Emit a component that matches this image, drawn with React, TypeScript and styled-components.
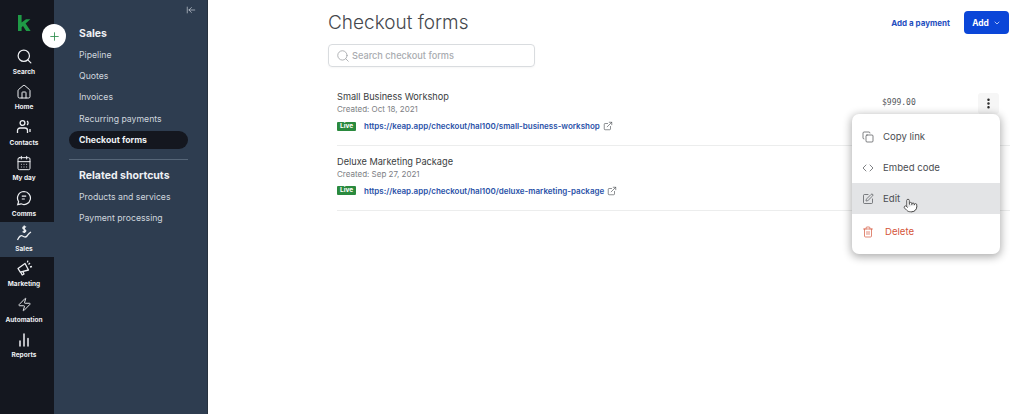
import React from "react";
import styled, { createGlobalStyle } from "styled-components";
import {
  Search, Home, CalendarDays, Zap, Plus, ExternalLink,
  Copy, Code, SquarePen, Trash2, Pointer, ChevronDown, EllipsisVertical, ArrowLeftToLine,
} from "lucide-react";

const Global = createGlobalStyle`
  html, body { margin: 0; padding: 0; background: #fff; }
  body { font-family: "Inter", "Liberation Sans", sans-serif; }
  * { box-sizing: border-box; }
`;

const Page = styled.div`
  position: relative;
  display: flex;
  width: 1024px;
  height: 414px;
  overflow: hidden;
`;

const Rail = styled.nav`
  width: 54px;
  flex: none;
  padding-top: 45px;
  background: #14171f;
  position: relative;
`;

const Logo = styled.svg`
  position: absolute;
  left: 17px;
  top: 15px;
`;

const RailItem = styled.div<{ $active?: boolean }>`
  height: 35.4px;
  display: flex;
  flex-direction: column;
  align-items: center;
  justify-content: flex-start;
  padding: 3px 6px 0 0;
  gap: 2px;
  color: #eef0f3;
  background: ${(p) => (p.$active ? "#2e3d50" : "transparent")};
`;

const RailIcon = styled.span`
  display: flex;
  height: 17px;
  align-items: center;
`;

const RailLabel = styled.span`
  font-size: 6.5px;
  line-height: 10px;
  font-weight: 700;
  white-space: nowrap;
`;

const AddCircle = styled.div`
  position: absolute;
  left: 42px;
  top: 24px;
  width: 24px;
  height: 24px;
  border-radius: 50%;
  background: #fff;
  color: #2f8f4e;
  display: flex;
  align-items: center;
  justify-content: center;
  z-index: 2;
`;

const SubNav = styled.aside`
  width: 154px;
  flex: none;
  position: relative;
  background: #2e3d50;
  border-right: 1px solid #27323f;
  padding: 26px 19px 0 15px;
  color: #cfd6de;
`;

const Collapse = styled.span`
  position: absolute;
  top: 5px;
  right: 11px;
  color: #d8dee5;
  display: flex;
`;

const SectionTitle = styled.div`
  font-size: 10.5px;
  line-height: 16px;
  font-weight: 700;
  color: #eef1f4;
  padding-left: 10px;
`;

const NavList = styled.div`
  display: flex;
  flex-direction: column;
  margin-top: 2px;
`;

const NavLink = styled.div<{ $active?: boolean }>`
  height: ${(p) => (p.$active ? "18px" : "21.3px")};
  margin: ${(p) => (p.$active ? "2px 0 0" : "0")};
  display: flex;
  align-items: center;
  padding-left: 10px;
  border-radius: 9px;
  font-size: 8.7px;
  font-weight: ${(p) => (p.$active ? 700 : 400)};
  color: ${(p) => (p.$active ? "#eef1f4" : "#cfd6de")};
  background: ${(p) => (p.$active ? "#14171f" : "transparent")};
  white-space: nowrap;
`;

const NavDivider = styled.div`
  height: 1px;
  background: #566678;
  margin: 10px 0 8px;
`;

const Main = styled.main`
  flex: 1;
  position: relative;
  padding: 0 14px 0 120px;
  background: #fff;
`;

const Header = styled.header`
  height: 44px;
  display: flex;
  align-items: flex-start;
  justify-content: space-between;
  padding-top: 11px;
`;

const Title = styled.h1`
  margin: 0;
  font-size: 19px;
  line-height: 23px;
  font-weight: 300;
  color: #45484d;
`;

const Actions = styled.div`
  display: flex;
  align-items: center;
  gap: 14px;
  padding-right: 1px;
`;

const TextButton = styled.span`
  font-size: 8px;
  font-weight: 700;
  color: #1f4fc0;
  white-space: nowrap;
`;

const PrimaryButton = styled.span`
  width: 45px;
  height: 23px;
  border-radius: 4px;
  background: #0b46d8;
  color: #fff;
  font-size: 8.4px;
  font-weight: 700;
  display: flex;
  align-items: center;
  justify-content: center;
  gap: 4px;
`;

const SearchBox = styled.div`
  width: 207px;
  height: 23px;
  border: 1px solid #d9dcdf;
  border-radius: 4px;
  display: flex;
  align-items: center;
  gap: 2px;
  padding-left: 7px;
  font-size: 9.2px;
  font-weight: 500;
  color: #a9acb0;
  box-shadow: 0 1px 2px rgba(0, 0, 0, 0.04);
`;

const Rows = styled.section`
  margin-top: 14.5px;
  padding-left: 9px;
`;

const Row = styled.article`
  height: 64.5px;
  padding-top: 8.5px;
  display: flex;
  justify-content: space-between;
  border-bottom: 1px solid #eceded;
`;

const RowBody = styled.div`
  display: flex;
  flex-direction: column;
`;

const RowName = styled.div`
  font-size: 9.2px;
  line-height: 13px;
  color: #3a3d41;
  font-weight: 400;
`;

const RowDate = styled.div`
  font-size: 8px;
  line-height: 13px;
  color: #7d8084;
`;

const LinkLine = styled.div`
  display: flex;
  align-items: center;
  margin-top: 4px;
  height: 12px;
  color: #4a4d52;
`;

const LiveBadge = styled.span`
  width: 19px;
  height: 9px;
  margin-right: 8px;
  border-radius: 1px;
  background: #2a8a3e;
  color: #fff;
  font-size: 6.5px;
  font-weight: 700;
  line-height: 9px;
  text-align: center;
`;

const RowLink = styled.span`
  font-size: 8px;
  font-weight: 600;
  color: #2a52a8;
  white-space: nowrap;
  margin-right: 3px;
`;

const RowSide = styled.div`
  display: flex;
  align-items: center;
  height: 26px;
  padding-right: 11px;
  color: #222;
`;

const Price = styled.span`
  font-family: "DejaVu Sans Mono", "Liberation Mono", monospace;
  font-size: 8px;
  line-height: 12px;
  color: #55585c;
  width: 96px;
`;

const Kebab = styled.span`
  width: 21px;
  height: 21px;
  border-radius: 3px;
  background: #f6f6f6;
  display: flex;
  align-items: center;
  justify-content: center;
`;

const Menu = styled.div`
  position: absolute;
  left: 644px;
  top: 114px;
  width: 148px;
  height: 140px;
  padding-top: 7px;
  border-radius: 7px;
  background: #fff;
  box-shadow: 0 2px 8px 1px rgba(0, 0, 0, 0.32);
  z-index: 3;
`;

const MenuItem = styled.div<{ $hover?: boolean; $danger?: boolean }>`
  height: 31px;
  margin-top: ${(p) => (p.$danger ? "2px" : "0")};
  display: flex;
  align-items: center;
  gap: ${(p) => (p.$danger ? "11px" : "9px")};
  padding-left: 10px;
  font-size: 9.6px;
  color: ${(p) => (p.$danger ? "#d4553a" : "#4a4d52")};
  background: ${(p) => (p.$hover ? "#e3e4e6" : "transparent")};
`;

const HandCursor = styled.span`
  position: absolute;
  left: 51px;
  top: 84px;
  display: flex;
  color: #333;
`;

const RailUsers = () => (
  <svg width="16" height="16" viewBox="0 0 16 16" fill="none" stroke="currentColor" strokeWidth="1.3">
    <circle cx="6.5" cy="4" r="2.4" />
    <path d="M1.5 14v-2.5A2.5 2.5 0 0 1 4 9h5a2.5 2.5 0 0 1 2.5 2.5V14" />
    <path d="M11 2a2.4 2.4 0 0 1 0 4M14 10v3" />
  </svg>
);

const RailComms = () => (
  <svg width="16" height="16" viewBox="0 0 16 16" fill="none" stroke="currentColor" strokeWidth="1.2">
    <path d="M8 1.5a6.5 6.5 0 1 1-3 12.3L1.7 14.6l.9-3A6.5 6.5 0 0 1 8 1.5z" />
    <path d="M5.8 6.2h4.4M5.8 9h3" />
  </svg>
);

const RailSales = () => (
  <svg width="17" height="17" viewBox="0 0 17 17" fill="none" stroke="currentColor" strokeWidth="1.3">
    <path d="M1.5 15c2-4 3.5-5 5-4s3 2 4.5 0 2-3 4-4" />
    <path d="M10 2.2C9 1.4 6.8 1.5 6.8 3s3 1.3 3 2.8-2.2 1.6-3.2.8M8.3 0.6v7.4" />
  </svg>
);

const RailMarketing = () => (
  <svg width="17" height="17" viewBox="0 0 17 17" fill="none" stroke="currentColor" strokeWidth="1.3" strokeLinejoin="round">
    <path d="M2 8.5l7-5 3.5 6.5-8.2 2.2z" />
    <path d="M4.6 12l1.6 3 1.8-1-1.2-2.6" />
    <path d="M12.5 4.5l1.5-1.5M14 7l2-.5M11.5 2.5l.3-1.8" />
  </svg>
);

const RailReports = () => (
  <svg width="16" height="16" viewBox="0 0 16 16" fill="none" stroke="currentColor" strokeWidth="1.5" strokeLinecap="round">
    <path d="M4 14V9M8 14V2M12 14V6.5" />
  </svg>
);

const railItems = [
  { label: "Search", icon: <Search size={17} strokeWidth={1.7} /> },
  { label: "Home", icon: <Home size={16} strokeWidth={1.5} /> },
  { label: "Contacts", icon: <RailUsers /> },
  { label: "My day", icon: <CalendarDays size={16} strokeWidth={1.5} /> },
  { label: "Comms", icon: <RailComms /> },
  { label: "Sales", icon: <RailSales />, active: true },
  { label: "Marketing", icon: <RailMarketing /> },
  { label: "Automation", icon: <Zap size={15} strokeWidth={1.5} /> },
  { label: "Reports", icon: <RailReports /> },
];

const forms = [
  {
    name: "Small Business Workshop",
    date: "Created: Oct 18, 2021",
    url: "https://keap.app/checkout/hal100/small-business-workshop",
    price: "$999.00",
  },
  {
    name: "Deluxe Marketing Package",
    date: "Created: Sep 27, 2021",
    url: "https://keap.app/checkout/hal100/deluxe-marketing-package",
  },
];

export default function App() {
  return (
    <Page>
      <Global />
      <Rail>
        <Logo width="14" height="17" viewBox="0 0 14 17">
          <path fill="#1f9a46" d="M1 0h3.6v7.5L9 4.2h4.4L8.6 8.4 13.6 16H9.2L6 11l-1.4 1.2V16H1z" />
        </Logo>
        {railItems.map((item) => (
          <RailItem key={item.label} $active={item.active}>
            <RailIcon>{item.icon}</RailIcon>
            <RailLabel>{item.label}</RailLabel>
          </RailItem>
        ))}
        <AddCircle>
          <Plus size={13} strokeWidth={1.6} />
        </AddCircle>
      </Rail>
      <SubNav>
        <Collapse>
          <ArrowLeftToLine size={10} strokeWidth={1.5} />
        </Collapse>
        <SectionTitle>Sales</SectionTitle>
        <NavList>
          <NavLink>Pipeline</NavLink>
          <NavLink>Quotes</NavLink>
          <NavLink>Invoices</NavLink>
          <NavLink>Recurring payments</NavLink>
          <NavLink $active>Checkout forms</NavLink>
        </NavList>
        <NavDivider />
        <SectionTitle>Related shortcuts</SectionTitle>
        <NavList>
          <NavLink>Products and services</NavLink>
          <NavLink>Payment processing</NavLink>
        </NavList>
      </SubNav>
      <Main>
        <Header>
          <Title>Checkout forms</Title>
          <Actions>
            <TextButton>Add a payment</TextButton>
            <PrimaryButton>
              Add <ChevronDown size={8} strokeWidth={2} />
            </PrimaryButton>
          </Actions>
        </Header>
        <SearchBox>
          <Search size={14} strokeWidth={1.4} color="#a0a3a7" />
          Search checkout forms
        </SearchBox>
        <Rows>
          {forms.map((form) => (
            <Row key={form.name}>
              <RowBody>
                <RowName>{form.name}</RowName>
                <RowDate>{form.date}</RowDate>
                <LinkLine>
                  <LiveBadge>Live</LiveBadge>
                  <RowLink>{form.url}</RowLink>
                  <ExternalLink size={10} strokeWidth={1.5} />
                </LinkLine>
              </RowBody>
              {form.price && (
                <RowSide>
                  <Price>{form.price}</Price>
                  <Kebab>
                    <EllipsisVertical size={13} strokeWidth={2.6} />
                  </Kebab>
                </RowSide>
              )}
            </Row>
          ))}
        </Rows>
        <Menu>
          <MenuItem><Copy size={12} strokeWidth={1.4} />Copy link</MenuItem>
          <MenuItem><Code size={12} strokeWidth={1.4} />Embed code</MenuItem>
          <MenuItem $hover><SquarePen size={12} strokeWidth={1.4} />Edit</MenuItem>
          <MenuItem $danger><Trash2 size={12} strokeWidth={1.4} color="#d4553a" />Delete</MenuItem>
          <HandCursor>
            <Pointer size={15} strokeWidth={1.3} fill="#fff" />
          </HandCursor>
        </Menu>
      </Main>
    </Page>
  );
}
